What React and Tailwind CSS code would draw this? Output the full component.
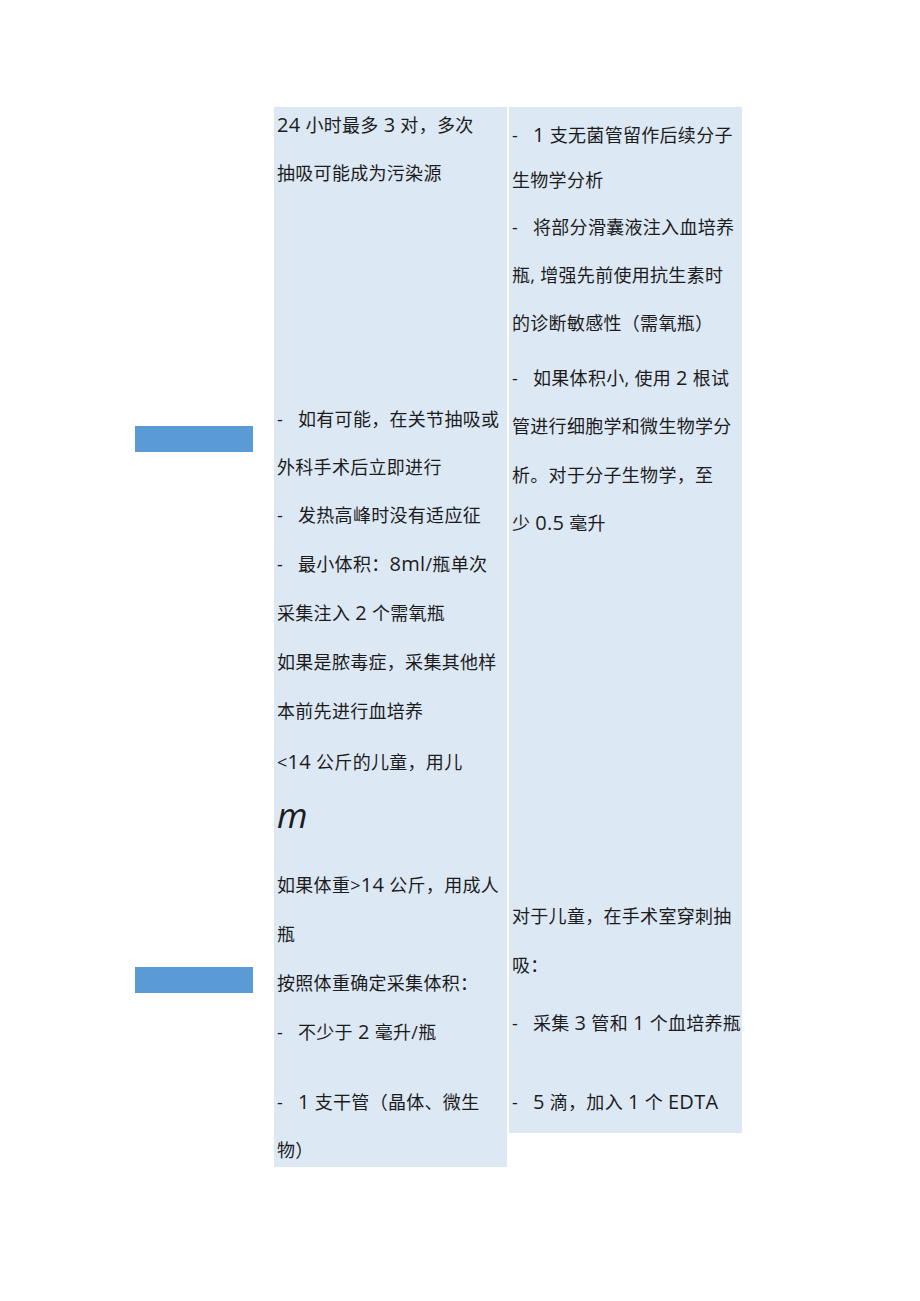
import React from "react";

const D = "-\u00a0\u00a0\u00a0";

// each line: text, gap above it (px)
const midLines = [
    { t: "24 小时最多 3 对，多次", mt: "mt-[6px]" },
    { t: "抽吸可能成为污染源", mt: "mt-[24px]" },
    { t: D + "如有可能，在关节抽吸或", mt: "mt-[222px]" },
    { t: "外科手术后立即进行", mt: "mt-[24px]" },
    { t: D + "发热高峰时没有适应征", mt: "mt-[24px]" },
    { t: D + "最小体积：8ml/瓶单次", mt: "mt-[25px]" },
    { t: "采集注入 2 个需氧瓶", mt: "mt-[25px]" },
    { t: "如果是脓毒症，采集其他样", mt: "mt-[25px]" },
    { t: "本前先进行血培养", mt: "mt-[25px]" },
    { t: "<14 公斤的儿童，用儿", mt: "mt-[27px]" },
    { t: "m", mt: "mt-[25px]", big: true },
    { t: "如果体重>14 公斤，用成人", mt: "mt-[42px]" },
    { t: "瓶", mt: "mt-[25px]" },
    { t: "按照体重确定采集体积：", mt: "mt-[25px]" },
    { t: D + "不少于 2 毫升/瓶", mt: "mt-[25px]" },
    { t: D + "1 支干管（晶体、微生", mt: "mt-[46px]" },
    { t: "物）", mt: "mt-[24px]" }
];

const rightLines = [
    { t: D + "1 支无菌管留作后续分子", mt: "mt-[16px]" },
    { t: "生物学分析", mt: "mt-[21px]" },
    { t: D + "将部分滑囊液注入血培养", mt: "mt-[23px]" },
    { t: "瓶, 增强先前使用抗生素时", mt: "mt-[24px]" },
    { t: "的诊断敏感性（需氧瓶）", mt: "mt-[24px]" },
    { t: D + "如果体积小, 使用 2 根试", mt: "mt-[31px]" },
    { t: "管进行细胞学和微生物学分", mt: "mt-[24px]" },
    { t: "析。对于分子生物学，至", mt: "mt-[25px]" },
    { t: "少 0.5 毫升", mt: "mt-[24px]" },
    { t: "对于儿童，在手术室穿刺抽", mt: "mt-[369px]" },
    { t: "吸：", mt: "mt-[25px]" },
    { t: D + "采集 3 管和 1 个血培养瓶", mt: "mt-[34px]" },
    { t: D + "5 滴，加入 1 个 EDTA", mt: "mt-[55px]" }
];

// latin runs are set a little larger, like in the original document
function Runs({ text }) {
    const parts = text.split(/([0-9A-Za-z.]+)/);
    return parts.map((p, i) =>
        i % 2 === 1 ? (
            <span key={i} className="text-[20px]">
                {p}
            </span>
        ) : (
            <span key={i}>{p}</span>
        )
    );
}

function Line({ line }) {
    if (line.big) {
        return (
            <div className={`${line.mt} h-[32px] leading-[32px] text-[35px] italic font-['Open_Sans',sans-serif]`}>
                {line.t}
            </div>
        );
    }
    return (
        <div className={`${line.mt} h-[24px] leading-[24px] whitespace-nowrap`}>
            <Runs text={line.t} />
        </div>
    );
}

export default function App() {
    return (
        <div className="w-[920px] h-[1301px] bg-white text-[#1c1c1c] text-[18px] font-['Open_Sans','Noto_Sans_CJK_SC',sans-serif]">
            <div className="flex items-start pt-[107px] pl-[135px]">
                <div className="w-[118px] flex flex-col">
                    <div className="mt-[319px] h-[26px] bg-[#5b9bd5]" />
                    <div className="mt-[515px] h-[26px] bg-[#5b9bd5]" />
                </div>
                <div className="ml-[21px] w-[233px] bg-[#dde8f5] pl-[3px] pb-[5px] tracking-[0.3px]">
                    {midLines.map((l, i) => (
                        <Line key={i} line={l} />
                    ))}
                </div>
                <div className="ml-[2px] w-[233px] bg-[#dde8f5] pl-[3px] pb-[19px] tracking-[0.3px]">
                    {rightLines.map((l, i) => (
                        <Line key={i} line={l} />
                    ))}
                </div>
            </div>
        </div>
    );
}
